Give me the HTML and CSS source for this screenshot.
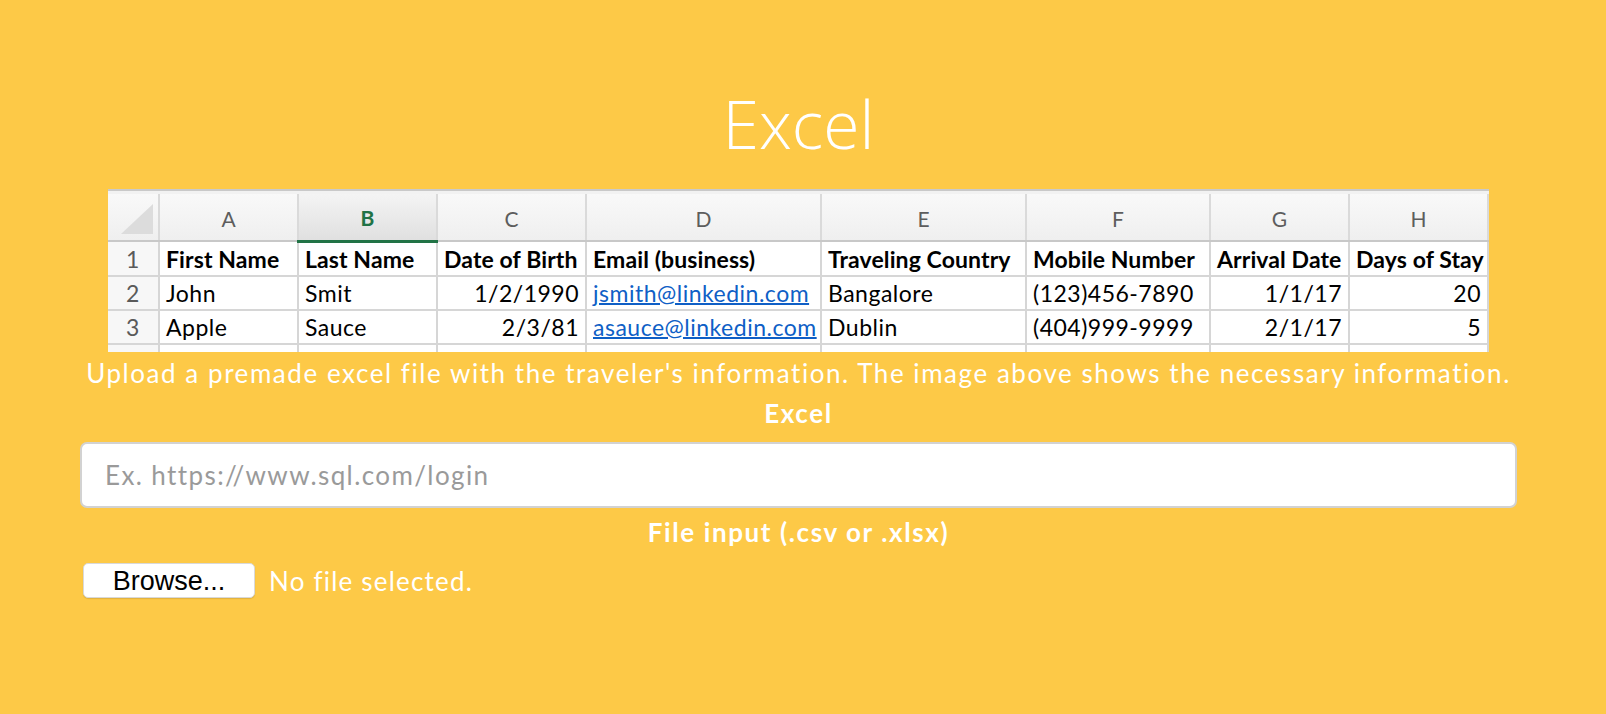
FILE: index.html
```html
<!DOCTYPE html>
<html lang="en">
<head>
<meta charset="utf-8">
<title>Excel</title>
<link rel="stylesheet" href="styles.css">
</head>
<body>
<main class="page">
  <h1 class="title">Excel</h1>
  <div class="sheet">
    <table class="grid">
      <colgroup>
        <col class="c-row"><col class="c-a"><col class="c-b"><col class="c-c"><col class="c-d"><col class="c-e"><col class="c-f"><col class="c-g"><col class="c-h">
      </colgroup>
      <thead>
        <tr class="hdr">
          <th class="corner"><span class="tri"></span></th>
          <th>A</th><th class="sel">B</th><th>C</th><th>D</th><th>E</th><th>F</th><th>G</th><th>H</th>
        </tr>
      </thead>
      <tbody>
        <tr class="r1">
          <td class="num">1</td>
          <td class="b">First Name</td><td class="b">Last Name</td><td class="b">Date of Birth</td><td class="b">Email (business)</td><td class="b">Traveling Country</td><td class="b">Mobile Number</td><td class="b">Arrival Date</td><td class="b">Days of Stay</td>
        </tr>
        <tr class="r2">
          <td class="num">2</td>
          <td>John</td><td>Smit</td><td class="rt">1/2/1990</td><td><span class="link">jsmith@linkedin.com</span></td><td>Bangalore</td><td>(123)456-7890</td><td class="rt">1/1/17</td><td class="rt">20</td>
        </tr>
        <tr class="r3">
          <td class="num">3</td>
          <td>Apple</td><td>Sauce</td><td class="rt">2/3/81</td><td><span class="link">asauce@linkedin.com</span></td><td>Dublin</td><td>(404)999-9999</td><td class="rt">2/1/17</td><td class="rt">5</td>
        </tr>
        <tr class="r4">
          <td class="num"></td><td></td><td></td><td></td><td></td><td></td><td></td><td></td><td></td>
        </tr>
      </tbody>
    </table>
  </div>
  <p class="desc">Upload a premade excel file with the traveler's information. The image above shows the necessary information.</p>
  <div class="label">Excel</div>
  <input class="text-input" type="text" placeholder="Ex. https://www.sql.com/login">
  <div class="label label-file">File input (.csv or .xlsx)</div>
  <div class="file-row">
    <span class="browse">Browse...</span>
    <span class="nofile">No file selected.</span>
  </div>
</main>
</body>
</html>
```
FILE: styles.css
```css
* { box-sizing: border-box; }
html, body { margin: 0; padding: 0; }
body {
  background: #fdc947;
  font-family: "Lato", "Noto Sans", sans-serif;
  color: #fff;
  width: 1606px;
  height: 714px;
  overflow: hidden;
}
.page {
  width: 1437px;
  margin-left: 80px;
  display: flex;
  flex-direction: column;
  align-items: center;
}
.title {
  margin: 83px 0 0;
  font-family: "Open Sans", "Lato", sans-serif;
  font-weight: 300;
  font-size: 66px;
  line-height: 80px;
  color: #fff;
}
.sheet {
  margin-top: 26px;
  width: 1381px;
  height: 163px;
  overflow: hidden;
  border-top: 2px solid #c9c9c9;
  padding-top: 3px;
  background: linear-gradient(#f2f2f2, #f2f2f2) top/100% 5px no-repeat, #fff;
}
.grid {
  table-layout: fixed;
  border-collapse: collapse;
  width: 1380px;
  font-family: "Lato", "Noto Sans", sans-serif;
  color: #000;
}
.c-row { width: 51px; }
.c-a, .c-b, .c-g, .c-h { width: 139px; }
.c-c { width: 149px; }
.c-d { width: 235px; }
.c-e { width: 205px; }
.c-f { width: 184px; }
.grid th, .grid td {
  border: 2px solid #d6d6d6;
  padding: 0 6px;
  white-space: nowrap;
  overflow: hidden;
}
.grid tr > :first-child { border-left: none; }
.hdr th {
  height: 47px;
  background: linear-gradient(#f9f9f9, #efefef);
  color: #5d5d5d;
  font-weight: 400;
  font-size: 21px;
  text-align: center;
  border-top: none;
  border-color: #dadada;
  border-bottom: 2px solid #c8c8c8;
  vertical-align: middle;
  padding-top: 2px;
}
.hdr th.sel {
  background: linear-gradient(#f4f4f4, #e0e0e0);
  color: #217346;
  font-weight: 700;
  border-bottom: 3px solid #217346;
}
.hdr th.corner {
  position: relative;
  padding: 0;
}
.tri {
  position: absolute;
  right: 5px;
  bottom: 6px;
  width: 0;
  height: 0;
  border-left: 32px solid transparent;
  border-bottom: 30px solid #dcdcdc;
}
.grid td {
  font-size: 23px;
  line-height: 26px;
  letter-spacing: 0.5px;
  vertical-align: bottom;
  padding-bottom: 3px;
}
.r1 td { height: 35px; }
.r2 td, .r3 td { height: 34px; }
.r4 td { height: 34px; }
.grid td.num {
  text-align: center;
  color: #5a5a5a;
  background: #f7f7f7;
  padding: 0 0 3px;
}
.grid td.b { font-weight: 700; letter-spacing: 0.1px; }
.grid td.rt { text-align: right; padding-right: 6px; }
.link {
  color: #0f5fc6;
  text-decoration: underline;
  text-underline-offset: 1px;
}
.desc {
  margin: 6px 0 0;
  font-size: 26px;
  line-height: 30px;
  letter-spacing: 1.55px;
  text-align: center;
  white-space: nowrap;
}
.label {
  margin-top: 10px;
  font-size: 26px;
  line-height: 30px;
  letter-spacing: 1.6px;
  font-weight: 700;
  text-align: center;
}
.text-input {
  margin-top: 14px;
  width: 1437px;
  height: 66px;
  border: 2px solid #d2d2d2;
  border-radius: 7px;
  background: #fff;
  padding: 0 23px;
  font-family: "Lato", "Noto Sans", sans-serif;
  font-size: 26px;
  letter-spacing: 1.4px;
  color: #333;
  outline: none;
}
.text-input::placeholder { color: #9a9a9a; }
.label-file { margin-top: 9px; }
.file-row {
  align-self: flex-start;
  margin-top: 16px;
  margin-left: 3px;
  display: flex;
  align-items: center;
  gap: 14px;
}
.browse {
  width: 172px;
  height: 35px;
  background: #fff;
  border: 1px solid #d9d9d9;
  border-radius: 5px;
  box-shadow: 0 1px 1px rgba(0,0,0,0.12);
  color: #000;
  font-family: "Liberation Sans", Arial, sans-serif;
  font-size: 27px;
  line-height: 34px;
  text-align: center;
}
.nofile {
  font-size: 26px;
  line-height: 30px;
  letter-spacing: 1.2px;
  color: #fff;
}
```
